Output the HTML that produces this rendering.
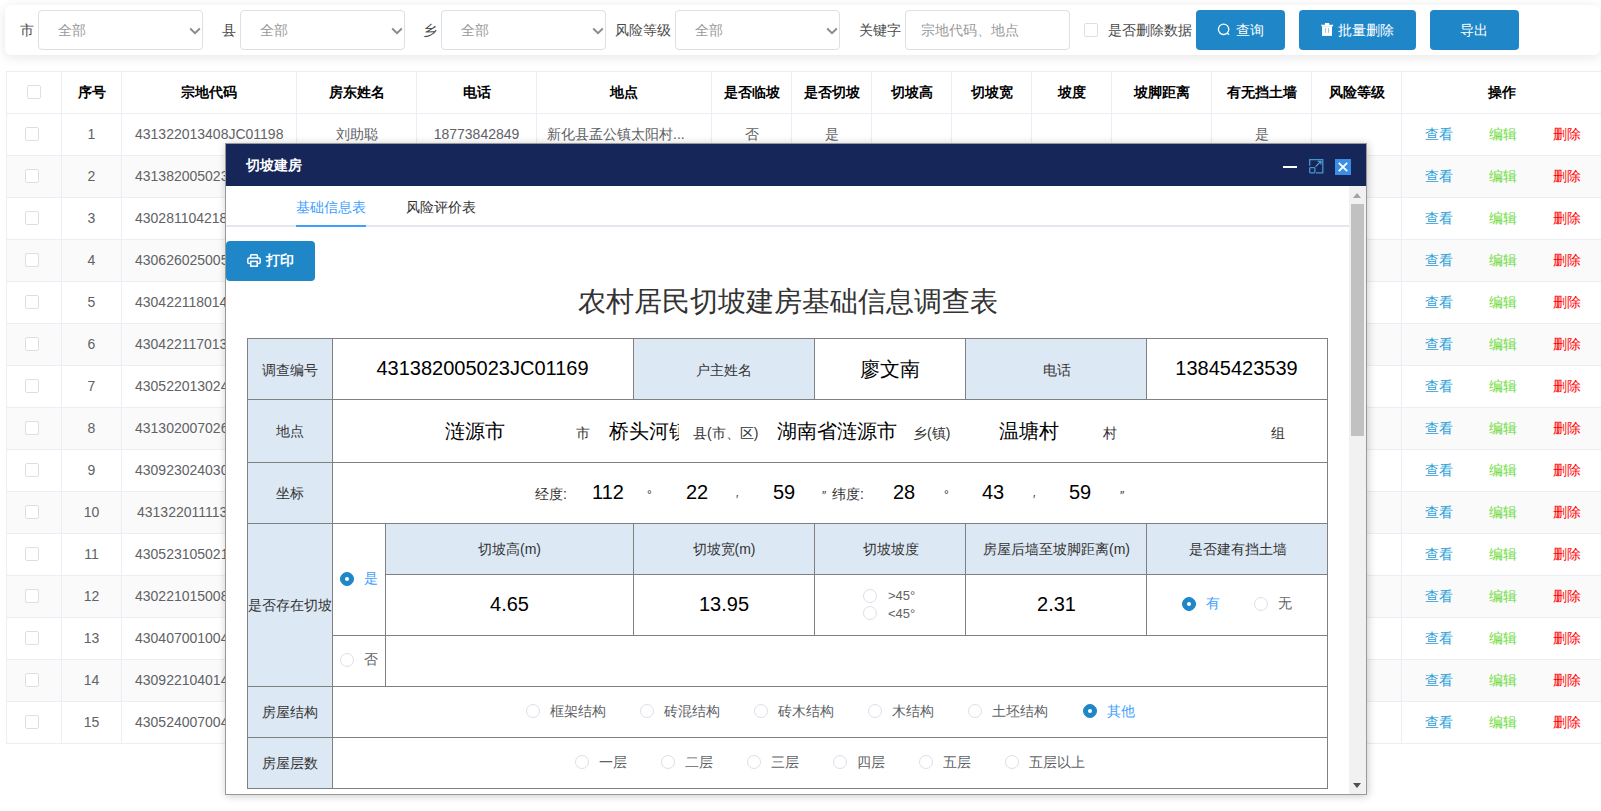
<!DOCTYPE html><html><head><meta charset="utf-8"><style>
*{box-sizing:border-box;margin:0;padding:0}
html,body{width:1601px;height:811px;overflow:hidden;background:#fff;font-family:"Liberation Sans",sans-serif;font-size:14px;color:#606266}
.abs{position:absolute}
.card{position:absolute;left:5px;top:5px;width:1595px;height:50px;background:#fff;border-radius:6px;box-shadow:0 2px 12px 0 rgba(0,0,0,.1)}
.lbl{position:absolute;top:22px;font-size:14px;line-height:16px;color:#4a4a4a;white-space:nowrap}
.sel{position:absolute;top:10px;height:40px;border:1px solid #dcdfe6;border-radius:4px;background:#fff}
.sel span{position:absolute;left:19px;top:11px;line-height:16px;color:#999;font-size:14px;white-space:nowrap}
.sel svg{position:absolute;left:150px;top:16px}
.btn{position:absolute;top:10px;height:40px;background:#1f87c8;border-radius:4px;color:#fff;font-size:14px}
.btn span{position:absolute;top:12px;line-height:16px;white-space:nowrap}
.row{position:absolute;left:6px;width:1700px;height:42px;border-bottom:1px solid #ebeef5}
.row.hd{border-top:1px solid #ebeef5;color:#000;font-weight:bold;height:43px}
.row.hd .c span{top:12px}
.row.alt{background:#fafafa}
.c{position:absolute;top:0;bottom:0;border-left:1px solid #ebeef5;text-align:center;white-space:nowrap;overflow:hidden}
.c span{position:absolute;left:0;right:0;top:12px;line-height:16px}
.cb{position:absolute;left:18px;top:13px;width:14px;height:14px;border:1px solid #dcdfe6;border-radius:2px;background:#fff}
.row.hd .cb{left:20px}
.c span.op{position:absolute;top:12px;right:auto;line-height:16px;white-space:nowrap}
/* modal */
.modal{position:absolute;left:225px;top:143px;width:1142px;height:652px;border:1px solid #999;background:#fff;box-shadow:1px 1px 8px rgba(0,0,0,.22)}
.mh{position:absolute;left:0;top:0;width:1140px;height:42px;background:#172659}
.fx{position:absolute;white-space:nowrap;line-height:1}
.ft{position:absolute;border-collapse:collapse}
.L{position:absolute;background:#dde8f5;border:1px solid #808080}
.V{position:absolute;border:1px solid #808080;background:#fff}
.radio{position:absolute;width:14px;height:14px;border-radius:50%;border:1px solid #dcdfe6;background:#fff}
.radio.on{background:#1f87c8;border-color:#1f87c8}
.radio.on::after{content:"";position:absolute;left:4px;top:4px;width:4px;height:4px;border-radius:50%;background:#fff}
</style></head><body>
<div class="card"></div>
<div class="lbl" style="left:20px">市</div>
<div class="lbl" style="left:222px">县</div>
<div class="lbl" style="left:423px">乡</div>
<div class="lbl" style="left:615px">风险等级</div>
<div class="lbl" style="left:859px">关键字</div>
<div class="lbl" style="left:1108px">是否删除数据</div>
<div class="sel" style="left:38px;width:165px"><span>全部</span><svg width="12" height="8" viewBox="0 0 12 8"><path d="M1.2 1.5 L6 6.2 L10.8 1.5" fill="none" stroke="#8a8a8a" stroke-width="1.9"/></svg></div>
<div class="sel" style="left:240px;width:165px"><span>全部</span><svg width="12" height="8" viewBox="0 0 12 8"><path d="M1.2 1.5 L6 6.2 L10.8 1.5" fill="none" stroke="#8a8a8a" stroke-width="1.9"/></svg></div>
<div class="sel" style="left:441px;width:165px"><span>全部</span><svg width="12" height="8" viewBox="0 0 12 8"><path d="M1.2 1.5 L6 6.2 L10.8 1.5" fill="none" stroke="#8a8a8a" stroke-width="1.9"/></svg></div>
<div class="sel" style="left:675px;width:165px"><span>全部</span><svg width="12" height="8" viewBox="0 0 12 8"><path d="M1.2 1.5 L6 6.2 L10.8 1.5" fill="none" stroke="#8a8a8a" stroke-width="1.9"/></svg></div>
<div class="sel" style="left:905px;width:165px"><span style="left:15px">宗地代码、地点</span></div>
<div class="abs" style="left:1084px;top:23px;width:14px;height:14px;border:1px solid #dcdfe6;border-radius:2px"></div>
<div class="btn" style="left:1196px;width:89px"><svg class="abs" style="left:21px;top:13px" width="14" height="14" viewBox="0 0 14 14"><circle cx="6.6" cy="6.3" r="5.2" fill="none" stroke="#fff" stroke-width="1.3"/><path d="M10.2 9.9 L12 11.8" stroke="#fff" stroke-width="1.3"/></svg><span style="left:40px">查询</span></div>
<div class="btn" style="left:1299px;width:117px"><svg class="abs" style="left:22px;top:13px" width="13" height="14" viewBox="0 0 13 14"><rect x="4" y="0" width="4.2" height="2" fill="#fff"/><path d="M0 1.8 H12.4 L11.6 3.4 H0.8 Z" fill="#fff"/><rect x="1" y="3.3" width="10" height="9.6" fill="#fff"/><rect x="4" y="4.9" width="1" height="4.9" fill="#9cc8e8"/><rect x="7" y="4.9" width="1" height="4.9" fill="#9cc8e8"/></svg><span style="left:39px">批量删除</span></div>
<div class="btn" style="left:1430px;width:89px"><span style="left:30px">导出</span></div>
<div class="row hd" style="top:71px"><div class="c" style="left:0px;width:55px;border-left:1px solid #ebeef5;"><div class="cb"></div></div><div class="c" style="left:55px;width:60px;"><span>序号</span></div><div class="c" style="left:115px;width:175px;"><span>宗地代码</span></div><div class="c" style="left:290px;width:120px;"><span>房东姓名</span></div><div class="c" style="left:410px;width:120px;"><span>电话</span></div><div class="c" style="left:530px;width:175px;"><span>地点</span></div><div class="c" style="left:705px;width:80px;"><span>是否临坡</span></div><div class="c" style="left:785px;width:80px;"><span>是否切坡</span></div><div class="c" style="left:865px;width:80px;"><span>切坡高</span></div><div class="c" style="left:945px;width:80px;"><span>切坡宽</span></div><div class="c" style="left:1025px;width:80px;"><span>坡度</span></div><div class="c" style="left:1105px;width:100px;"><span>坡脚距离</span></div><div class="c" style="left:1205px;width:100px;"><span>有无挡土墙</span></div><div class="c" style="left:1305px;width:90px;"><span>风险等级</span></div><div class="c" style="left:1395px;width:200px;"><span>操作</span></div></div>
<div class="row " style="top:114px"><div class="c" style="left:0px;width:55px;border-left:1px solid #ebeef5;"><div class="cb"></div></div><div class="c" style="left:55px;width:60px;"><span>1</span></div><div class="c" style="left:115px;width:175px;"><span style="left:13px;right:auto">431322013408JC01198</span></div><div class="c" style="left:290px;width:120px;"><span>刘助聪</span></div><div class="c" style="left:410px;width:120px;"><span>18773842849</span></div><div class="c" style="left:530px;width:175px;"><span style="left:10px;right:auto">新化县孟公镇太阳村...</span></div><div class="c" style="left:705px;width:80px;"><span>否</span></div><div class="c" style="left:785px;width:80px;"><span>是</span></div><div class="c" style="left:865px;width:80px;"></div><div class="c" style="left:945px;width:80px;"></div><div class="c" style="left:1025px;width:80px;"></div><div class="c" style="left:1105px;width:100px;"></div><div class="c" style="left:1205px;width:100px;"><span>是</span></div><div class="c" style="left:1305px;width:90px;"></div><div class="c" style="left:1395px;width:200px;"><span class="op" style="left:23px;color:#2a9fd8">查看</span><span class="op" style="left:87px;color:#6ddc3c">编辑</span><span class="op" style="left:151px;color:#f00">删除</span></div></div>
<div class="row alt" style="top:156px"><div class="c" style="left:0px;width:55px;border-left:1px solid #ebeef5;"><div class="cb"></div></div><div class="c" style="left:55px;width:60px;"><span>2</span></div><div class="c" style="left:115px;width:175px;"><span style="left:13px;right:auto">431382005023JC01169</span></div><div class="c" style="left:290px;width:120px;"></div><div class="c" style="left:410px;width:120px;"></div><div class="c" style="left:530px;width:175px;"></div><div class="c" style="left:705px;width:80px;"></div><div class="c" style="left:785px;width:80px;"></div><div class="c" style="left:865px;width:80px;"></div><div class="c" style="left:945px;width:80px;"></div><div class="c" style="left:1025px;width:80px;"></div><div class="c" style="left:1105px;width:100px;"></div><div class="c" style="left:1205px;width:100px;"></div><div class="c" style="left:1305px;width:90px;"></div><div class="c" style="left:1395px;width:200px;"><span class="op" style="left:23px;color:#2a9fd8">查看</span><span class="op" style="left:87px;color:#6ddc3c">编辑</span><span class="op" style="left:151px;color:#f00">删除</span></div></div>
<div class="row " style="top:198px"><div class="c" style="left:0px;width:55px;border-left:1px solid #ebeef5;"><div class="cb"></div></div><div class="c" style="left:55px;width:60px;"><span>3</span></div><div class="c" style="left:115px;width:175px;"><span style="left:13px;right:auto">430281104218JC00337</span></div><div class="c" style="left:290px;width:120px;"></div><div class="c" style="left:410px;width:120px;"></div><div class="c" style="left:530px;width:175px;"></div><div class="c" style="left:705px;width:80px;"></div><div class="c" style="left:785px;width:80px;"></div><div class="c" style="left:865px;width:80px;"></div><div class="c" style="left:945px;width:80px;"></div><div class="c" style="left:1025px;width:80px;"></div><div class="c" style="left:1105px;width:100px;"></div><div class="c" style="left:1205px;width:100px;"></div><div class="c" style="left:1305px;width:90px;"></div><div class="c" style="left:1395px;width:200px;"><span class="op" style="left:23px;color:#2a9fd8">查看</span><span class="op" style="left:87px;color:#6ddc3c">编辑</span><span class="op" style="left:151px;color:#f00">删除</span></div></div>
<div class="row alt" style="top:240px"><div class="c" style="left:0px;width:55px;border-left:1px solid #ebeef5;"><div class="cb"></div></div><div class="c" style="left:55px;width:60px;"><span>4</span></div><div class="c" style="left:115px;width:175px;"><span style="left:13px;right:auto">430626025005JC00924</span></div><div class="c" style="left:290px;width:120px;"></div><div class="c" style="left:410px;width:120px;"></div><div class="c" style="left:530px;width:175px;"></div><div class="c" style="left:705px;width:80px;"></div><div class="c" style="left:785px;width:80px;"></div><div class="c" style="left:865px;width:80px;"></div><div class="c" style="left:945px;width:80px;"></div><div class="c" style="left:1025px;width:80px;"></div><div class="c" style="left:1105px;width:100px;"></div><div class="c" style="left:1205px;width:100px;"></div><div class="c" style="left:1305px;width:90px;"></div><div class="c" style="left:1395px;width:200px;"><span class="op" style="left:23px;color:#2a9fd8">查看</span><span class="op" style="left:87px;color:#6ddc3c">编辑</span><span class="op" style="left:151px;color:#f00">删除</span></div></div>
<div class="row " style="top:282px"><div class="c" style="left:0px;width:55px;border-left:1px solid #ebeef5;"><div class="cb"></div></div><div class="c" style="left:55px;width:60px;"><span>5</span></div><div class="c" style="left:115px;width:175px;"><span style="left:13px;right:auto">430422118014JC00215</span></div><div class="c" style="left:290px;width:120px;"></div><div class="c" style="left:410px;width:120px;"></div><div class="c" style="left:530px;width:175px;"></div><div class="c" style="left:705px;width:80px;"></div><div class="c" style="left:785px;width:80px;"></div><div class="c" style="left:865px;width:80px;"></div><div class="c" style="left:945px;width:80px;"></div><div class="c" style="left:1025px;width:80px;"></div><div class="c" style="left:1105px;width:100px;"></div><div class="c" style="left:1205px;width:100px;"></div><div class="c" style="left:1305px;width:90px;"></div><div class="c" style="left:1395px;width:200px;"><span class="op" style="left:23px;color:#2a9fd8">查看</span><span class="op" style="left:87px;color:#6ddc3c">编辑</span><span class="op" style="left:151px;color:#f00">删除</span></div></div>
<div class="row alt" style="top:324px"><div class="c" style="left:0px;width:55px;border-left:1px solid #ebeef5;"><div class="cb"></div></div><div class="c" style="left:55px;width:60px;"><span>6</span></div><div class="c" style="left:115px;width:175px;"><span style="left:13px;right:auto">430422117013JC00108</span></div><div class="c" style="left:290px;width:120px;"></div><div class="c" style="left:410px;width:120px;"></div><div class="c" style="left:530px;width:175px;"></div><div class="c" style="left:705px;width:80px;"></div><div class="c" style="left:785px;width:80px;"></div><div class="c" style="left:865px;width:80px;"></div><div class="c" style="left:945px;width:80px;"></div><div class="c" style="left:1025px;width:80px;"></div><div class="c" style="left:1105px;width:100px;"></div><div class="c" style="left:1205px;width:100px;"></div><div class="c" style="left:1305px;width:90px;"></div><div class="c" style="left:1395px;width:200px;"><span class="op" style="left:23px;color:#2a9fd8">查看</span><span class="op" style="left:87px;color:#6ddc3c">编辑</span><span class="op" style="left:151px;color:#f00">删除</span></div></div>
<div class="row " style="top:366px"><div class="c" style="left:0px;width:55px;border-left:1px solid #ebeef5;"><div class="cb"></div></div><div class="c" style="left:55px;width:60px;"><span>7</span></div><div class="c" style="left:115px;width:175px;"><span style="left:13px;right:auto">430522013024JC00311</span></div><div class="c" style="left:290px;width:120px;"></div><div class="c" style="left:410px;width:120px;"></div><div class="c" style="left:530px;width:175px;"></div><div class="c" style="left:705px;width:80px;"></div><div class="c" style="left:785px;width:80px;"></div><div class="c" style="left:865px;width:80px;"></div><div class="c" style="left:945px;width:80px;"></div><div class="c" style="left:1025px;width:80px;"></div><div class="c" style="left:1105px;width:100px;"></div><div class="c" style="left:1205px;width:100px;"></div><div class="c" style="left:1305px;width:90px;"></div><div class="c" style="left:1395px;width:200px;"><span class="op" style="left:23px;color:#2a9fd8">查看</span><span class="op" style="left:87px;color:#6ddc3c">编辑</span><span class="op" style="left:151px;color:#f00">删除</span></div></div>
<div class="row alt" style="top:408px"><div class="c" style="left:0px;width:55px;border-left:1px solid #ebeef5;"><div class="cb"></div></div><div class="c" style="left:55px;width:60px;"><span>8</span></div><div class="c" style="left:115px;width:175px;"><span style="left:13px;right:auto">431302007026JC00257</span></div><div class="c" style="left:290px;width:120px;"></div><div class="c" style="left:410px;width:120px;"></div><div class="c" style="left:530px;width:175px;"></div><div class="c" style="left:705px;width:80px;"></div><div class="c" style="left:785px;width:80px;"></div><div class="c" style="left:865px;width:80px;"></div><div class="c" style="left:945px;width:80px;"></div><div class="c" style="left:1025px;width:80px;"></div><div class="c" style="left:1105px;width:100px;"></div><div class="c" style="left:1205px;width:100px;"></div><div class="c" style="left:1305px;width:90px;"></div><div class="c" style="left:1395px;width:200px;"><span class="op" style="left:23px;color:#2a9fd8">查看</span><span class="op" style="left:87px;color:#6ddc3c">编辑</span><span class="op" style="left:151px;color:#f00">删除</span></div></div>
<div class="row " style="top:450px"><div class="c" style="left:0px;width:55px;border-left:1px solid #ebeef5;"><div class="cb"></div></div><div class="c" style="left:55px;width:60px;"><span>9</span></div><div class="c" style="left:115px;width:175px;"><span style="left:13px;right:auto">430923024030JC00126</span></div><div class="c" style="left:290px;width:120px;"></div><div class="c" style="left:410px;width:120px;"></div><div class="c" style="left:530px;width:175px;"></div><div class="c" style="left:705px;width:80px;"></div><div class="c" style="left:785px;width:80px;"></div><div class="c" style="left:865px;width:80px;"></div><div class="c" style="left:945px;width:80px;"></div><div class="c" style="left:1025px;width:80px;"></div><div class="c" style="left:1105px;width:100px;"></div><div class="c" style="left:1205px;width:100px;"></div><div class="c" style="left:1305px;width:90px;"></div><div class="c" style="left:1395px;width:200px;"><span class="op" style="left:23px;color:#2a9fd8">查看</span><span class="op" style="left:87px;color:#6ddc3c">编辑</span><span class="op" style="left:151px;color:#f00">删除</span></div></div>
<div class="row alt" style="top:492px"><div class="c" style="left:0px;width:55px;border-left:1px solid #ebeef5;"><div class="cb"></div></div><div class="c" style="left:55px;width:60px;"><span>10</span></div><div class="c" style="left:115px;width:175px;"><span style="left:15px;right:auto">431322011113JC01002</span></div><div class="c" style="left:290px;width:120px;"></div><div class="c" style="left:410px;width:120px;"></div><div class="c" style="left:530px;width:175px;"></div><div class="c" style="left:705px;width:80px;"></div><div class="c" style="left:785px;width:80px;"></div><div class="c" style="left:865px;width:80px;"></div><div class="c" style="left:945px;width:80px;"></div><div class="c" style="left:1025px;width:80px;"></div><div class="c" style="left:1105px;width:100px;"></div><div class="c" style="left:1205px;width:100px;"></div><div class="c" style="left:1305px;width:90px;"></div><div class="c" style="left:1395px;width:200px;"><span class="op" style="left:23px;color:#2a9fd8">查看</span><span class="op" style="left:87px;color:#6ddc3c">编辑</span><span class="op" style="left:151px;color:#f00">删除</span></div></div>
<div class="row " style="top:534px"><div class="c" style="left:0px;width:55px;border-left:1px solid #ebeef5;"><div class="cb"></div></div><div class="c" style="left:55px;width:60px;"><span>11</span></div><div class="c" style="left:115px;width:175px;"><span style="left:13px;right:auto">430523105021JC00410</span></div><div class="c" style="left:290px;width:120px;"></div><div class="c" style="left:410px;width:120px;"></div><div class="c" style="left:530px;width:175px;"></div><div class="c" style="left:705px;width:80px;"></div><div class="c" style="left:785px;width:80px;"></div><div class="c" style="left:865px;width:80px;"></div><div class="c" style="left:945px;width:80px;"></div><div class="c" style="left:1025px;width:80px;"></div><div class="c" style="left:1105px;width:100px;"></div><div class="c" style="left:1205px;width:100px;"></div><div class="c" style="left:1305px;width:90px;"></div><div class="c" style="left:1395px;width:200px;"><span class="op" style="left:23px;color:#2a9fd8">查看</span><span class="op" style="left:87px;color:#6ddc3c">编辑</span><span class="op" style="left:151px;color:#f00">删除</span></div></div>
<div class="row alt" style="top:576px"><div class="c" style="left:0px;width:55px;border-left:1px solid #ebeef5;"><div class="cb"></div></div><div class="c" style="left:55px;width:60px;"><span>12</span></div><div class="c" style="left:115px;width:175px;"><span style="left:13px;right:auto">430221015008JC00133</span></div><div class="c" style="left:290px;width:120px;"></div><div class="c" style="left:410px;width:120px;"></div><div class="c" style="left:530px;width:175px;"></div><div class="c" style="left:705px;width:80px;"></div><div class="c" style="left:785px;width:80px;"></div><div class="c" style="left:865px;width:80px;"></div><div class="c" style="left:945px;width:80px;"></div><div class="c" style="left:1025px;width:80px;"></div><div class="c" style="left:1105px;width:100px;"></div><div class="c" style="left:1205px;width:100px;"></div><div class="c" style="left:1305px;width:90px;"></div><div class="c" style="left:1395px;width:200px;"><span class="op" style="left:23px;color:#2a9fd8">查看</span><span class="op" style="left:87px;color:#6ddc3c">编辑</span><span class="op" style="left:151px;color:#f00">删除</span></div></div>
<div class="row " style="top:618px"><div class="c" style="left:0px;width:55px;border-left:1px solid #ebeef5;"><div class="cb"></div></div><div class="c" style="left:55px;width:60px;"><span>13</span></div><div class="c" style="left:115px;width:175px;"><span style="left:13px;right:auto">430407001004JC00035</span></div><div class="c" style="left:290px;width:120px;"></div><div class="c" style="left:410px;width:120px;"></div><div class="c" style="left:530px;width:175px;"></div><div class="c" style="left:705px;width:80px;"></div><div class="c" style="left:785px;width:80px;"></div><div class="c" style="left:865px;width:80px;"></div><div class="c" style="left:945px;width:80px;"></div><div class="c" style="left:1025px;width:80px;"></div><div class="c" style="left:1105px;width:100px;"></div><div class="c" style="left:1205px;width:100px;"></div><div class="c" style="left:1305px;width:90px;"></div><div class="c" style="left:1395px;width:200px;"><span class="op" style="left:23px;color:#2a9fd8">查看</span><span class="op" style="left:87px;color:#6ddc3c">编辑</span><span class="op" style="left:151px;color:#f00">删除</span></div></div>
<div class="row alt" style="top:660px"><div class="c" style="left:0px;width:55px;border-left:1px solid #ebeef5;"><div class="cb"></div></div><div class="c" style="left:55px;width:60px;"><span>14</span></div><div class="c" style="left:115px;width:175px;"><span style="left:13px;right:auto">430922104014JC00128</span></div><div class="c" style="left:290px;width:120px;"></div><div class="c" style="left:410px;width:120px;"></div><div class="c" style="left:530px;width:175px;"></div><div class="c" style="left:705px;width:80px;"></div><div class="c" style="left:785px;width:80px;"></div><div class="c" style="left:865px;width:80px;"></div><div class="c" style="left:945px;width:80px;"></div><div class="c" style="left:1025px;width:80px;"></div><div class="c" style="left:1105px;width:100px;"></div><div class="c" style="left:1205px;width:100px;"></div><div class="c" style="left:1305px;width:90px;"></div><div class="c" style="left:1395px;width:200px;"><span class="op" style="left:23px;color:#2a9fd8">查看</span><span class="op" style="left:87px;color:#6ddc3c">编辑</span><span class="op" style="left:151px;color:#f00">删除</span></div></div>
<div class="row " style="top:702px"><div class="c" style="left:0px;width:55px;border-left:1px solid #ebeef5;"><div class="cb"></div></div><div class="c" style="left:55px;width:60px;"><span>15</span></div><div class="c" style="left:115px;width:175px;"><span style="left:13px;right:auto">430524007004JC00215</span></div><div class="c" style="left:290px;width:120px;"></div><div class="c" style="left:410px;width:120px;"></div><div class="c" style="left:530px;width:175px;"></div><div class="c" style="left:705px;width:80px;"></div><div class="c" style="left:785px;width:80px;"></div><div class="c" style="left:865px;width:80px;"></div><div class="c" style="left:945px;width:80px;"></div><div class="c" style="left:1025px;width:80px;"></div><div class="c" style="left:1105px;width:100px;"></div><div class="c" style="left:1205px;width:100px;"></div><div class="c" style="left:1305px;width:90px;"></div><div class="c" style="left:1395px;width:200px;"><span class="op" style="left:23px;color:#2a9fd8">查看</span><span class="op" style="left:87px;color:#6ddc3c">编辑</span><span class="op" style="left:151px;color:#f00">删除</span></div></div>
<div class="modal">
<div class="mh"><div class="fx" style="left:20px;top:14px;color:#fff;font-size:14px;font-weight:bold">切坡建房</div><div class="abs" style="left:1057px;top:22px;width:14px;height:2px;background:#fff"></div><svg class="abs" style="left:1083px;top:15px" width="15" height="15" viewBox="0 0 15 15"><path d="M0.7 6.8 V0.7 H13.8 V13.8 H7" fill="none" stroke="#4596d0" stroke-width="1.3"/><rect x="0.7" y="8.6" width="5.2" height="5.2" rx="0.8" fill="none" stroke="#4596d0" stroke-width="1.3"/><path d="M6.6 7.6 L12 2.2 M8.6 2.2 H12 V5.6" fill="none" stroke="#5aacdf" stroke-width="1.1"/></svg><div class="abs" style="left:1109px;top:15px;width:16px;height:16px;background:#3a8ee6"><svg class="abs" style="left:3px;top:3px" width="10" height="10" viewBox="0 0 10 10"><path d="M0.8 0.8 L9.2 9.2 M9.2 0.8 L0.8 9.2" stroke="#fff" stroke-width="1.8"/></svg></div></div>
<div class="abs" style="left:1123px;top:42px;width:17px;height:608px;background:#f1f1f1"></div>
<div class="abs" style="left:1125px;top:60px;width:13px;height:232px;background:#c1c1c1"></div>
<div class="abs" style="left:1127px;top:49px;width:0;height:0;border-left:4.5px solid transparent;border-right:4.5px solid transparent;border-bottom:5px solid #a3a3a3"></div>
<div class="abs" style="left:1127px;top:639px;width:0;height:0;border-left:4.5px solid transparent;border-right:4.5px solid transparent;border-top:5px solid #505050"></div>
<div class="abs" style="left:0;top:81px;width:1123px;height:2px;background:#e4e7ed"></div>
<div class="fx" style="left:70px;top:56px;font-size:14px;color:#409eff">基础信息表</div>
<div class="abs" style="left:70px;top:81px;width:70px;height:2px;background:#409eff"></div>
<div class="fx" style="left:180px;top:56px;font-size:14px;color:#303133">风险评价表</div>
<div class="abs" style="left:0;top:97px;width:89px;height:40px;background:#1f87c8;border-radius:4px"><svg class="abs" style="left:21px;top:13px" width="14" height="13" viewBox="0 0 14 13"><path d="M3.6 4 V1.6 Q3.6 0.8 4.4 0.8 H9.6 Q10.4 0.8 10.4 1.6 V4" fill="none" stroke="#fff" stroke-width="1.5"/><path d="M3.4 9.6 H2.2 Q0.8 9.6 0.8 8.2 V5.4 Q0.8 4 2.2 4 H11.8 Q13.2 4 13.2 5.4 V8.2 Q13.2 9.6 11.8 9.6 H10.6" fill="none" stroke="#fff" stroke-width="1.5"/><rect x="3.8" y="7.4" width="6.4" height="4.8" fill="none" stroke="#fff" stroke-width="1.5"/></svg><div class="fx" style="left:40px;top:12px;color:#fff;font-size:14px;font-weight:bold">打印</div></div>
<div class="fx" style="left:0;width:1123px;text-align:center;top:144px;font-size:28px;color:#333">农村居民切坡建房基础信息调查表</div>
<div class="L" style="left:21px;top:194px;width:86px;height:62px;"></div>
<div class="V" style="left:106px;top:194px;width:302px;height:62px;"></div>
<div class="L" style="left:407px;top:194px;width:182px;height:62px;"></div>
<div class="V" style="left:588px;top:194px;width:152px;height:62px;"></div>
<div class="L" style="left:739px;top:194px;width:182px;height:62px;"></div>
<div class="V" style="left:920px;top:194px;width:182px;height:62px;"></div>
<div class="L" style="left:21px;top:255px;width:86px;height:64px;"></div>
<div class="V" style="left:106px;top:255px;width:996px;height:64px;"></div>
<div class="L" style="left:21px;top:318px;width:86px;height:62px;"></div>
<div class="V" style="left:106px;top:318px;width:996px;height:62px;"></div>
<div class="L" style="left:21px;top:379px;width:86px;height:164px;"></div>
<div class="V" style="left:106px;top:379px;width:54px;height:113px;"></div>
<div class="V" style="left:106px;top:491px;width:54px;height:52px;"></div>
<div class="L" style="left:159px;top:379px;width:249px;height:52px;"></div>
<div class="L" style="left:407px;top:379px;width:182px;height:52px;"></div>
<div class="L" style="left:588px;top:379px;width:152px;height:52px;"></div>
<div class="L" style="left:739px;top:379px;width:182px;height:52px;"></div>
<div class="L" style="left:920px;top:379px;width:182px;height:52px;"></div>
<div class="V" style="left:159px;top:430px;width:249px;height:62px;"></div>
<div class="V" style="left:407px;top:430px;width:182px;height:62px;"></div>
<div class="V" style="left:588px;top:430px;width:152px;height:62px;"></div>
<div class="V" style="left:739px;top:430px;width:182px;height:62px;"></div>
<div class="V" style="left:920px;top:430px;width:182px;height:62px;"></div>
<div class="V" style="left:159px;top:491px;width:943px;height:52px;"></div>
<div class="L" style="left:21px;top:542px;width:86px;height:52px;"></div>
<div class="V" style="left:106px;top:542px;width:996px;height:52px;"></div>
<div class="L" style="left:21px;top:593px;width:86px;height:52px;"></div>
<div class="V" style="left:106px;top:593px;width:996px;height:52px;"></div>
<div class="fx" style="left:21px;width:86px;text-align:center;top:219px;font-size:14px;color:#333;">调查编号</div>
<div class="fx" style="left:407px;width:182px;text-align:center;top:219px;font-size:14px;color:#333;">户主姓名</div>
<div class="fx" style="left:740px;width:181px;text-align:center;top:219px;font-size:14px;color:#333;">电话</div>
<div class="fx" style="left:21px;width:86px;text-align:center;top:280px;font-size:14px;color:#333;">地点</div>
<div class="fx" style="left:21px;width:86px;text-align:center;top:342px;font-size:14px;color:#333;">坐标</div>
<div class="fx" style="left:22px;top:454px;font-size:14px;color:#333;">是否存在切坡</div>
<div class="fx" style="left:21px;width:86px;text-align:center;top:561px;font-size:14px;color:#333;">房屋结构</div>
<div class="fx" style="left:21px;width:86px;text-align:center;top:612px;font-size:14px;color:#333;">房屋层数</div>
<div class="fx" style="left:106px;width:301px;text-align:center;top:214px;font-size:20px;color:#000;">431382005023JC01169</div>
<div class="fx" style="left:588px;width:151px;text-align:center;top:215px;font-size:20px;color:#000;">廖文南</div>
<div class="fx" style="left:920px;width:181px;text-align:center;top:214px;font-size:20px;color:#000;">13845423539</div>
<div class="fx" style="left:219px;top:277px;font-size:20px;color:#000;">涟源市</div>
<div class="fx" style="left:350px;top:282px;font-size:14px;color:#333;">市</div>
<div class="fx" style="left:383px;top:277px;width:70px;overflow:hidden;font-size:20px;color:#000">桥头河镇</div>
<div class="fx" style="left:467px;top:282px;font-size:14px;color:#333;">县(市、区)</div>
<div class="fx" style="left:551px;top:277px;font-size:20px;color:#000;">湖南省涟源市</div>
<div class="fx" style="left:687px;top:282px;font-size:14px;color:#333;">乡(镇)</div>
<div class="fx" style="left:773px;top:277px;font-size:20px;color:#000;">温塘村</div>
<div class="fx" style="left:877px;top:282px;font-size:14px;color:#333;">村</div>
<div class="fx" style="left:1045px;top:282px;font-size:14px;color:#333;">组</div>
<div class="fx" style="left:309px;top:343px;font-size:14px;color:#333;">经度:</div>
<div class="fx" style="left:366px;top:338px;font-size:20px;color:#000;">112</div>
<div class="fx" style="left:421px;top:345px;font-size:12px;color:#333;">°</div>
<div class="fx" style="left:460px;top:338px;font-size:20px;color:#000;">22</div>
<div class="fx" style="left:510px;top:350px;font-size:12px;color:#333;">′</div>
<div class="fx" style="left:547px;top:338px;font-size:20px;color:#000;">59</div>
<div class="fx" style="left:596px;top:346px;font-size:12px;color:#333;">″</div>
<div class="fx" style="left:606px;top:343px;font-size:14px;color:#333;">纬度:</div>
<div class="fx" style="left:667px;top:338px;font-size:20px;color:#000;">28</div>
<div class="fx" style="left:718px;top:345px;font-size:12px;color:#333;">°</div>
<div class="fx" style="left:756px;top:338px;font-size:20px;color:#000;">43</div>
<div class="fx" style="left:807px;top:350px;font-size:12px;color:#333;">′</div>
<div class="fx" style="left:843px;top:338px;font-size:20px;color:#000;">59</div>
<div class="fx" style="left:894px;top:346px;font-size:12px;color:#333;">″</div>
<div class="fx" style="left:160px;width:247px;text-align:center;top:398px;font-size:14px;color:#333;">切坡高(m)</div>
<div class="fx" style="left:407px;width:182px;text-align:center;top:398px;font-size:14px;color:#333;">切坡宽(m)</div>
<div class="fx" style="left:589px;width:151px;text-align:center;top:398px;font-size:14px;color:#333;">切坡坡度</div>
<div class="fx" style="left:740px;width:181px;text-align:center;top:398px;font-size:14px;color:#333;">房屋后墙至坡脚距离(m)</div>
<div class="fx" style="left:921px;width:181px;text-align:center;top:398px;font-size:14px;color:#333;">是否建有挡土墙</div>
<div class="fx" style="left:160px;width:247px;text-align:center;top:450px;font-size:20px;color:#000;">4.65</div>
<div class="fx" style="left:407px;width:182px;text-align:center;top:450px;font-size:20px;color:#000;">13.95</div>
<div class="fx" style="left:740px;width:181px;text-align:center;top:450px;font-size:20px;color:#000;">2.31</div>
<div class="radio on" style="left:114px;top:428px"></div>
<div class="fx" style="left:138px;top:427px;font-size:14px;color:#409eff;">是</div>
<div class="radio" style="left:114px;top:509px"></div>
<div class="fx" style="left:138px;top:508px;font-size:14px;color:#606266;">否</div>
<div class="radio" style="left:637px;top:445px"></div>
<div class="fx" style="left:662px;top:445px;font-size:13px;color:#606266;">>45°</div>
<div class="radio" style="left:637px;top:462px"></div>
<div class="fx" style="left:662px;top:463px;font-size:13px;color:#606266;"><45°</div>
<div class="radio on" style="left:956px;top:453px"></div>
<div class="fx" style="left:980px;top:452px;font-size:14px;color:#409eff;">有</div>
<div class="radio" style="left:1028px;top:453px"></div>
<div class="fx" style="left:1052px;top:452px;font-size:14px;color:#606266;">无</div>
<div class="radio" style="left:300px;top:560px"></div>
<div class="fx" style="left:324px;top:560px;font-size:14px;color:#606266;">框架结构</div>
<div class="radio" style="left:414px;top:560px"></div>
<div class="fx" style="left:438px;top:560px;font-size:14px;color:#606266;">砖混结构</div>
<div class="radio" style="left:528px;top:560px"></div>
<div class="fx" style="left:552px;top:560px;font-size:14px;color:#606266;">砖木结构</div>
<div class="radio" style="left:642px;top:560px"></div>
<div class="fx" style="left:666px;top:560px;font-size:14px;color:#606266;">木结构</div>
<div class="radio" style="left:742px;top:560px"></div>
<div class="fx" style="left:766px;top:560px;font-size:14px;color:#606266;">土坯结构</div>
<div class="radio on" style="left:857px;top:560px"></div>
<div class="fx" style="left:881px;top:560px;font-size:14px;color:#409eff;">其他</div>
<div class="radio" style="left:349px;top:611px"></div>
<div class="fx" style="left:373px;top:611px;font-size:14px;color:#606266;">一层</div>
<div class="radio" style="left:435px;top:611px"></div>
<div class="fx" style="left:459px;top:611px;font-size:14px;color:#606266;">二层</div>
<div class="radio" style="left:521px;top:611px"></div>
<div class="fx" style="left:545px;top:611px;font-size:14px;color:#606266;">三层</div>
<div class="radio" style="left:607px;top:611px"></div>
<div class="fx" style="left:631px;top:611px;font-size:14px;color:#606266;">四层</div>
<div class="radio" style="left:693px;top:611px"></div>
<div class="fx" style="left:717px;top:611px;font-size:14px;color:#606266;">五层</div>
<div class="radio" style="left:779px;top:611px"></div>
<div class="fx" style="left:803px;top:611px;font-size:14px;color:#606266;">五层以上</div>
</div>
</body></html>
